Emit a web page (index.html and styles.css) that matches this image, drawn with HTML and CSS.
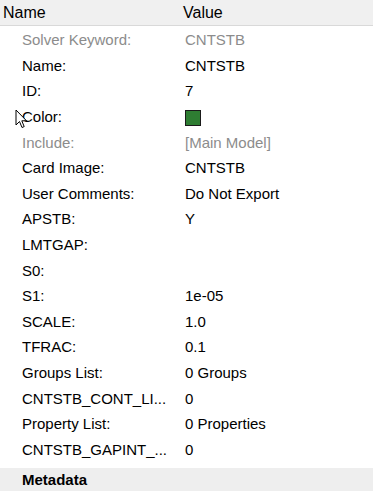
FILE: index.html
```html
<!DOCTYPE html>
<html lang="en">
<head>
    <meta charset="UTF-8">
    <meta name="viewport" content="width=device-width, initial-scale=1.0">
    <title>Entity Editor</title>
    <link rel="stylesheet" href="styles.css">
</head>
<body>
    <div class="header">
        <div class="col-name">Name</div>
        <div class="col-value">Value</div>
    </div>

    <div class="rows">
        <div class="row muted"><span class="name">Solver Keyword:</span><span class="value">CNTSTB</span></div>
        <div class="row"><span class="name">Name:</span><span class="value">CNTSTB</span></div>
        <div class="row"><span class="name">ID:</span><span class="value">7</span></div>
        <div class="row"><span class="name">Color:</span><span class="value"><span class="swatch"></span></span></div>
        <div class="row muted"><span class="name">Include:</span><span class="value">[Main Model]</span></div>
        <div class="row"><span class="name">Card Image:</span><span class="value">CNTSTB</span></div>
        <div class="row"><span class="name">User Comments:</span><span class="value">Do Not Export</span></div>
        <div class="row"><span class="name">APSTB:</span><span class="value">Y</span></div>
        <div class="row"><span class="name">LMTGAP:</span><span class="value"></span></div>
        <div class="row"><span class="name">S0:</span><span class="value"></span></div>
        <div class="row"><span class="name">S1:</span><span class="value">1e-05</span></div>
        <div class="row"><span class="name">SCALE:</span><span class="value">1.0</span></div>
        <div class="row"><span class="name">TFRAC:</span><span class="value">0.1</span></div>
        <div class="row"><span class="name">Groups List:</span><span class="value">0 Groups</span></div>
        <div class="row"><span class="name">CNTSTB_CONT_LI...</span><span class="value">0</span></div>
        <div class="row"><span class="name">Property List:</span><span class="value">0 Properties</span></div>
        <div class="row"><span class="name">CNTSTB_GAPINT_...</span><span class="value">0</span></div>
    </div>

    <div class="section">Metadata</div>

    <!-- mouse pointer caught in the screenshot -->
    <svg class="cursor" width="13" height="20" viewBox="0 0 13 20">
        <path d="M1 1 L1 16 L4.5 12.5 L7 18.5 L9.2 17.6 L6.8 11.8 L11.5 11.8 Z" fill="#fff" stroke="#000" stroke-width="1" stroke-linejoin="round"/>
    </svg>
</body>
</html>
```

FILE: styles.css
```css
body {
    margin: 0;
    font-family: "Liberation Sans", Arial, sans-serif;
    background-color: #fff;
    color: #000;
    position: relative;
}

.header {
    display: flex;
    height: 25px;
    align-items: center;
    background-color: #f0f0f0;
    border-bottom: 1px solid #d9d9d9;
    font-size: 16px;
}

.col-name {
    width: 180px;
    padding-left: 3px;
}

.col-value {
    flex: 1;
}

.rows {
    padding-top: 1px;
}

.row {
    display: flex;
    align-items: center;
    height: 25.6px;
    font-size: 15px;
}

.row .name {
    width: 163px;
    padding-left: 22px;
    white-space: nowrap;
}

.row .value {
    flex: 1;
}

.muted {
    color: #8c8c8c;
}

.swatch {
    display: inline-block;
    width: 14px;
    height: 14px;
    background-color: #2e7d32;
    border: 1px solid #1a1a1a;
    vertical-align: middle;
}

.section {
    margin-top: 6px;
    height: 23px;
    display: flex;
    align-items: center;
    padding-left: 22px;
    background-color: #eeeeee;
    font-size: 15px;
    font-weight: bold;
}

.cursor {
    position: absolute;
    left: 15px;
    top: 109px;
}
```
